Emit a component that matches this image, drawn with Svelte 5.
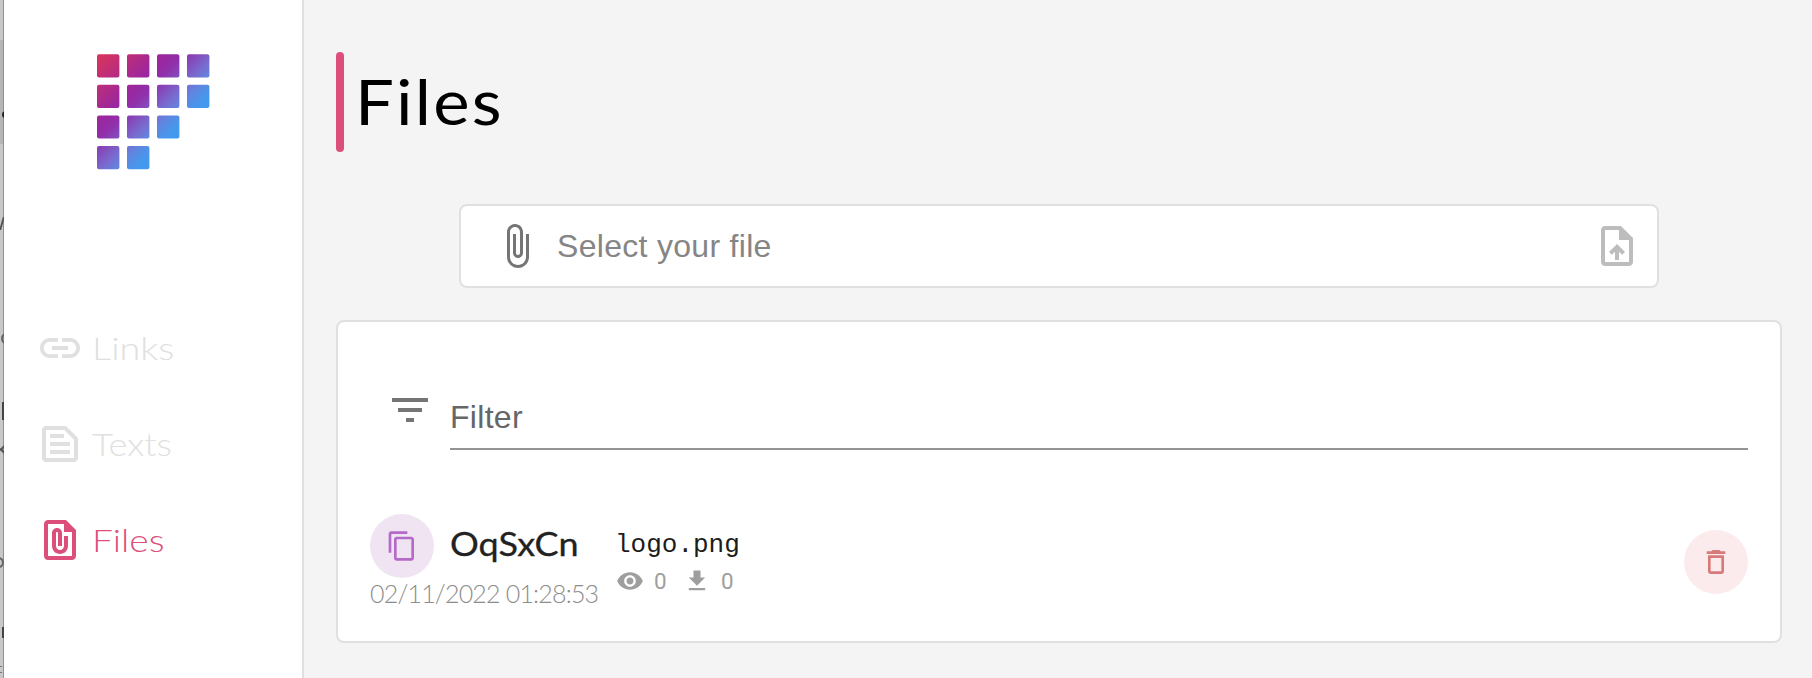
<script>
  const nav = [
    { label: 'Links', stretch: 1.2, d: 'M3.9 12c0-1.71 1.39-3.1 3.1-3.1h4V7H7c-2.76 0-5 2.24-5 5s2.24 5 5 5h4v-1.9H7c-1.71 0-3.1-1.39-3.1-3.1zM8 13h8v-2H8v2zm9-6h-4v1.9h4c1.71 0 3.1 1.39 3.1 3.1s-1.39 3.1-3.1 3.1h-4V17h4c2.76 0 5-2.24 5-5s-2.24-5-5-5z' },
    { label: 'Texts', stretch: 1.15, d: 'M14.17 5L19 9.83V19H5V5h9.17m0-2H5c-1.1 0-2 .9-2 2v14c0 1.1.9 2 2 2h14c1.1 0 2-.9 2-2V9.83c0-.53-.21-1.04-.59-1.41l-4.83-4.83c-.37-.38-.88-.59-1.41-.59zM7 15h10v2H7v-2zm0-4h10v2H7v-2zm0-4h7v2H7V7z' },
    { label: 'Files', active: true, stretch: 1.18, d: 'M15 2H6c-1.1 0-2 .9-2 2v16c0 1.1.9 2 2 2h12c1.1 0 2-.9 2-2V7l-5-5zM6 20V4h8v4h4v12H6zm10-10v5c0 2.21-1.79 4-4 4s-4-1.79-4-4V8.5C8 7.12 9.12 6 10.5 6S13 7.12 13 8.5V15h-2V8.5c0-.28-.22-.5-.5-.5s-.5.22-.5.5V15c0 1.1.9 2 2 2s2-.9 2-2v-5h2z' }
  ];
  const tiles = [4, 4, 3, 2].flatMap((n, row) => Array.from({ length: n }, (_, col) => ({ x: col * 30, y: row * 30.6 })));
</script>

{#snippet icon(d, size)}
  <svg class="icon" width={size} height={size} viewBox="0 0 24 24" aria-hidden="true"><path {d} /></svg>
{/snippet}

<div class="page">
  <div class="edge">
    <i class="band"></i>
    <i class="dot"></i>
    <i class="slash"></i>
    <i class="curve"></i>
    <i class="block"></i>
    <i class="cross"></i>
    <i class="bowl"></i>
    <i class="bracket"></i>
    <i class="dash"></i>
  </div>
  <aside>
    <svg class="logo" width="113" height="116" viewBox="0 0 113 116" aria-hidden="true">
      <defs>
        <linearGradient id="brand" gradientUnits="userSpaceOnUse" x1="0" y1="0" x2="78" y2="78">
          <stop offset="0" stop-color="#dc345a" />
          <stop offset=".45" stop-color="#9a269f" />
          <stop offset=".56" stop-color="#9030ab" />
          <stop offset=".78" stop-color="#7670d2" />
          <stop offset=".86" stop-color="#6085e0" />
          <stop offset=".98" stop-color="#4499ee" />
        </linearGradient>
      </defs>
      {#each tiles as t}
        <rect x={t.x} y={t.y + 0.2} width="22.4" height="23.2" rx="2" fill="url(#brand)" />
      {/each}
    </svg>
    <nav>
      {#each nav as item}
        <a class:active={item.active}>
          {@render icon(item.d, 48)}
          <span class="label" style="transform: scaleX({item.stretch})">{item.label}</span>
        </a>
      {/each}
    </nav>
  </aside>
  <main>
    <h1><span class="wide">Files</span></h1>
    <div class="picker">
      {@render icon('M16.5 6v11.5c0 2.21-1.79 4-4 4s-4-1.79-4-4V5c0-1.38 1.12-2.5 2.5-2.5s2.5 1.12 2.5 2.5v10.5c0 .55-.45 1-1 1s-1-.45-1-1V6H10v9.5c0 1.38 1.12 2.5 2.5 2.5s2.5-1.12 2.5-2.5V5c0-2.21-1.79-4-4-4S7 2.79 7 5v12.5c0 3.04 2.46 5.5 5.5 5.5s5.5-2.46 5.5-5.5V6h-1.5z', 48)}
      <span class="placeholder">Select your file</span>
      <span class="upload">{@render icon('M14 2H6c-1.1 0-1.99.9-1.99 2L4 20c0 1.1.89 2 1.99 2H18c1.1 0 2-.9 2-2V8l-6-6zm4 18H6V4h7v5h5v11zM8 15.01l1.41 1.41L11 14.84V19h2v-4.16l1.59 1.59L16 15.01 12.01 11 8 15.01z', 48)}</span>
    </div>
    <section class="card">
      <div class="filter">
        {@render icon('M10 18h4v-2h-4v2zM3 6v2h18V6H3zm3 7h12v-2H6v2z', 48)}
        <div class="field">Filter</div>
      </div>
      <div class="row">
        <div class="identity">
          <div class="code">
            <span class="round copy">{@render icon('M16 1H4c-1.1 0-2 .9-2 2v14h2V3h12V1zm3 4H8c-1.1 0-2 .9-2 2v14c0 1.1.9 2 2 2h11c1.1 0 2-.9 2-2V7c0-1.1-.9-2-2-2zm0 16H8V7h11v14z', 32)}</span>
            <span class="wide short">OqSxCn</span>
          </div>
          <div class="date">02/11/2022 01:28:53</div>
        </div>
        <div class="details">
          <div class="name">logo.png</div>
          <div class="stats">
            {@render icon('M12 4.5C7 4.5 2.73 7.61 1 12c1.73 4.39 6 7.5 11 7.5s9.27-3.11 11-7.5c-1.73-4.39-6-7.5-11-7.5zM12 17c-2.76 0-5-2.24-5-5s2.24-5 5-5 5 2.24 5 5-2.24 5-5 5zm0-8c-1.66 0-3 1.34-3 3s1.34 3 3 3 3-1.34 3-3-1.34-3-3-3z', 28)}
            <span class="count">0</span>
            {@render icon('M19 9h-4V3H9v6H5l7 7 7-7zM5 18v2h14v-2H5z', 28)}
            <span class="count">0</span>
          </div>
        </div>
        <span class="round delete">{@render icon('M16 9v10H8V9h8m-1.5-6h-5l-1 1H5v2h14V4h-3.5l-1-1zM18 7H6v12c0 1.1.9 2 2 2h8c1.1 0 2-.9 2-2V7z', 32)}</span>
      </div>
    </section>
  </main>
</div>

<style>
  :global(body) { background: #f4f4f4; overflow: hidden; }
  .page { display: flex; height: 678px; box-sizing: border-box; font-family: Lato, sans-serif; background: #f4f4f4; }
  .icon { display: block; flex: none; fill: currentColor; }
  .wide, .label { display: inline-block; transform-origin: left center; white-space: pre; }

  .edge { position: relative; width: 4px; flex: none; overflow: hidden; background: linear-gradient(90deg, #c8c8c6 3px, #90908e 3px); }
  .edge i { position: absolute; box-sizing: border-box; }
  .edge .band { top: 40px; left: 0; width: 3px; height: 104px; background: #b6b6b4; }
  .edge .dot { top: 111px; left: 2px; width: 7px; height: 7px; border-radius: 50%; background: #1c1c1c; }
  .edge .slash { top: 217px; left: 1px; width: 2px; height: 13px; background: #555; transform: skewX(-16deg); }
  .edge .curve { top: 333px; left: 1px; width: 10px; height: 11px; border: 2px solid #666; border-radius: 50%; }
  .edge .block { top: 402px; left: 2px; width: 2px; height: 18px; background: #444; }
  .edge .cross { top: 446px; left: -4px; width: 7px; height: 7px; border: solid #555; border-width: 0 0 2px 2px; transform: translateX(5px) rotate(45deg); }
  .edge .bowl { top: 557px; left: -7px; width: 11px; height: 11px; border: 2px solid #666; border-radius: 50%; }
  .edge .bracket { top: 627px; left: 2px; width: 6px; height: 11px; border: 2px solid #444; border-right: 0; }
  .edge .dash { top: 666px; left: 0; width: 2px; height: 7px; border: solid #777; border-width: 1px 0; }

  aside { width: 300px; flex: none; box-sizing: border-box; padding-top: 54px; background: #fff; border-right: 2px solid #e0e0e0; }
  .logo { display: block; margin: 0 0 130px 93px; }
  nav a { display: flex; align-items: center; gap: 8px; height: 96px; padding-left: 32px; color: #e0e0e0; font-size: 31.5px; font-weight: 300; }
  nav a.active { color: #dc4f7b; }

  main { flex: 1; min-width: 0; padding: 52px 30px 0 32px; }
  h1 { display: flex; align-items: center; gap: 11px; height: 100px; margin: 0 0 52px; color: #000; font-size: 62px; line-height: 98px; font-weight: 400; }
  h1 .wide { padding-bottom: 2px; letter-spacing: 2px; transform: scaleX(1.11); }
  h1::before { content: ''; width: 8px; height: 100px; border-radius: 4px; background: #dc4f7b; }
  .picker { display: flex; align-items: center; width: 1200px; height: 84px; box-sizing: border-box; margin: 0 0 32px 123px; padding: 0 16px 0 32px; border: 2px solid #e0e0e0; border-radius: 8px; background: #fff; color: #757575; }
  .placeholder { flex: 1; margin-left: 16px; font: 32px/40px "Liberation Sans", sans-serif; letter-spacing: .3px; color: #858585; }
  .upload { color: #bdbdbd; }

  .card { box-sizing: border-box; height: 323px; padding: 64px 32px 31px; border: 2px solid #e0e0e0; border-radius: 8px; background: #fff; }
  .filter { display: flex; padding-left: 16px; gap: 16px; color: #757575; }
  .field { flex: 1; height: 62px; border-bottom: 2px solid #949494; font: 32px/62px "Liberation Sans", sans-serif; letter-spacing: .3px; color: #666; }
  .row { display: flex; align-items: center; height: 96px; margin-top: 64px; }
  .identity { width: 246px; }
  .code { display: flex; align-items: center; gap: 16px; height: 64px; font-size: 32px; color: #222; }
  .short { padding-bottom: 5px; -webkit-text-stroke: .3px #222; transform: scaleX(1.125); }
  .round { display: grid; place-items: center; width: 64px; height: 64px; flex: none; border-radius: 50%; }
  .copy { background: #f0e4f3; color: #b36ac8; }
  .delete { margin-left: auto; background: #fbebec; color: #d97a7a; }
  .date { height: 32px; line-height: 31px; font-size: 25px; font-weight: 300; letter-spacing: -.8px; white-space: nowrap; color: #8c8c8c; }
  .name { padding-top: 3px; line-height: 35px; margin-left: -1px; font-family: "Liberation Mono", monospace; font-size: 26px; color: #1c1c1c; }
  .stats { display: flex; align-items: center; height: 36px; color: #9e9e9e; }
  .count { width: 29px; margin-left: 10px; font: 22.4px/28px Roboto, sans-serif; }
</style>
